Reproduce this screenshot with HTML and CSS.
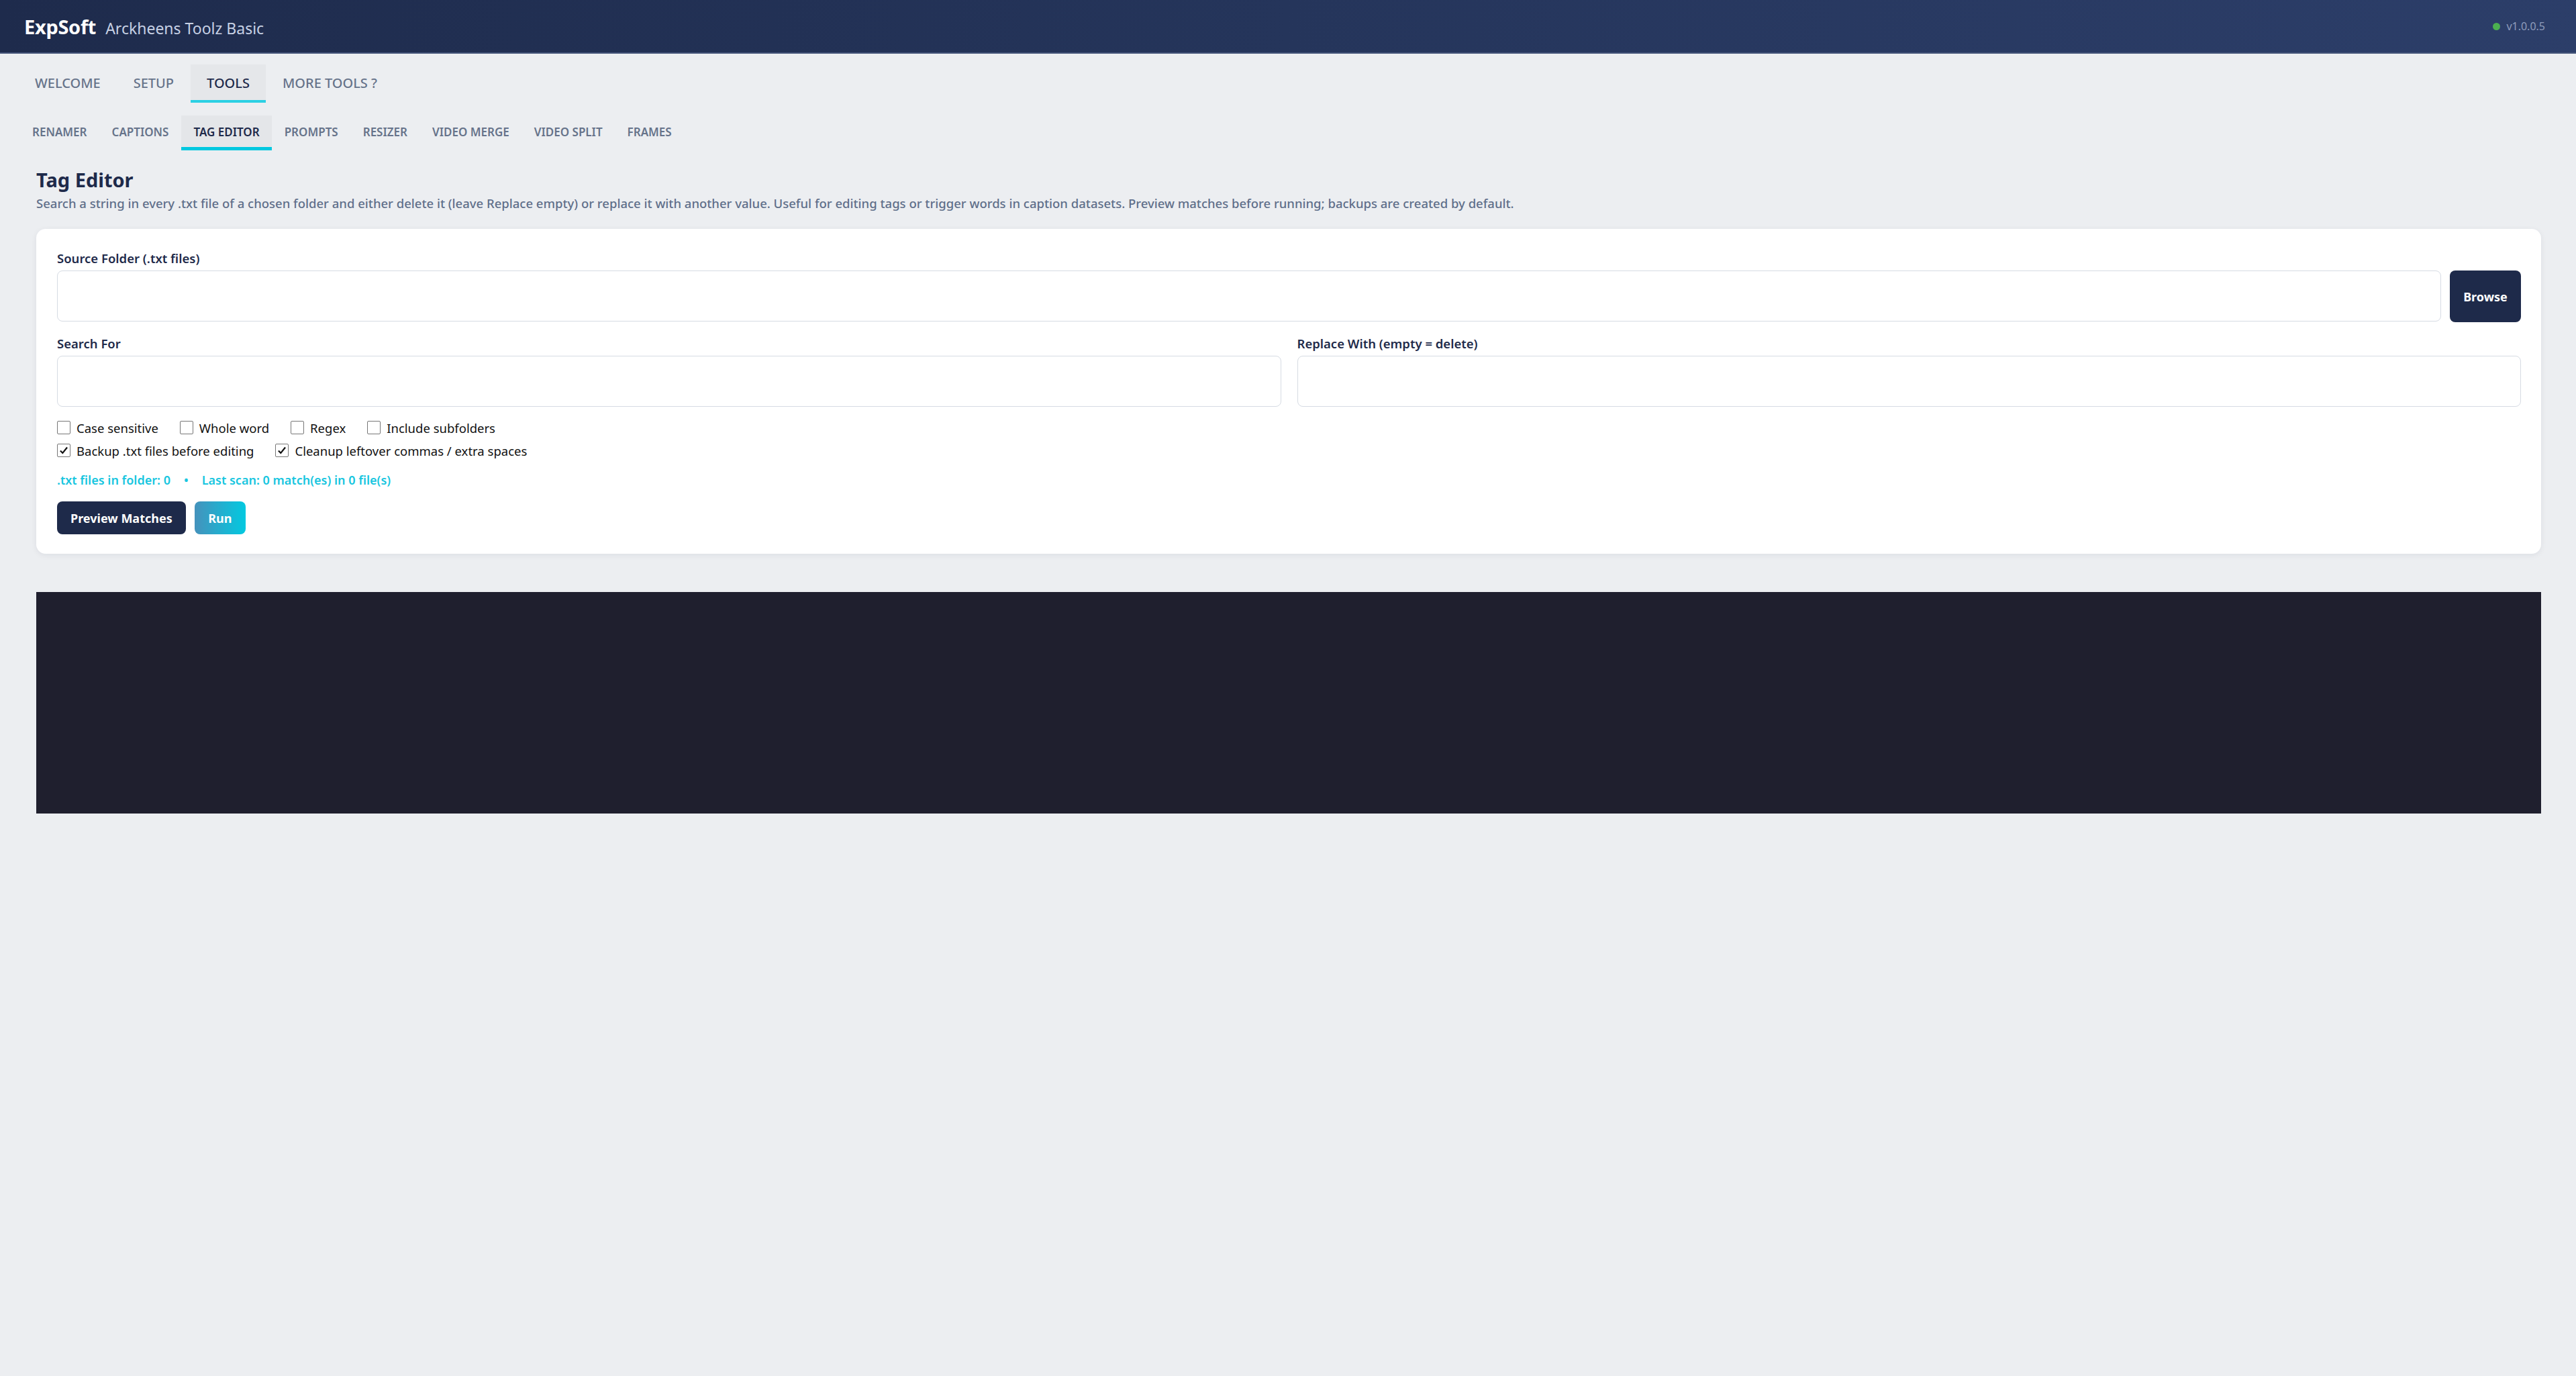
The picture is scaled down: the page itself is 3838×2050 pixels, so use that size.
FILE: index.html
```html
<!DOCTYPE html>
<html lang="en">
<head>
 <meta charset="UTF-8">
 <title>Arckheens Toolz Basic</title>
 <link rel="stylesheet" href="styles.css">
</head>
<body>
 <header class="topbar">
 <div class="brand">
 <span class="brand-name">ExpSoft</span>
 <span class="brand-app">Arckheens Toolz Basic</span>
 </div>
 <div class="version">
 <span class="version-dot"></span>
 <span>v1.0.0.5</span>
 </div>
 </header>

 <nav class="main-tabs">
 <div class="main-tab">WELCOME</div>
 <div class="main-tab">SETUP</div>
 <div class="main-tab active">TOOLS</div>
 <div class="main-tab">MORE TOOLS ?</div>
 </nav>

 <nav class="sub-tabs">
 <div class="sub-tab">RENAMER</div>
 <div class="sub-tab">CAPTIONS</div>
 <div class="sub-tab active">TAG EDITOR</div>
 <div class="sub-tab">PROMPTS</div>
 <div class="sub-tab">RESIZER</div>
 <div class="sub-tab">VIDEO MERGE</div>
 <div class="sub-tab">VIDEO SPLIT</div>
 <div class="sub-tab">FRAMES</div>
 </nav>

 <main class="content">
 <h1 class="page-title">Tag Editor</h1>
 <p class="page-desc">Search a string in every .txt file of a chosen folder and either delete it (leave Replace empty) or replace it with another value. Useful for editing tags or trigger words in caption datasets. Preview matches before running; backups are created by default.</p>

 <section class="card">
 <div class="field">
 <label class="field-label">Source Folder (.txt files)</label>
 <div class="folder-row">
 <input type="text" class="input-field">
 <button class="btn btn-dark btn-browse">Browse</button>
 </div>
 </div>

 <div class="field-grid">
 <div class="field">
 <label class="field-label">Search For</label>
 <input type="text" class="input-field">
 </div>
 <div class="field">
 <label class="field-label">Replace With (empty = delete)</label>
 <input type="text" class="input-field">
 </div>
 </div>

 <div class="check-row">
 <label class="check"><span class="check-box"></span>Case sensitive</label>
 <label class="check"><span class="check-box"></span>Whole word</label>
 <label class="check"><span class="check-box"></span>Regex</label>
 <label class="check"><span class="check-box"></span>Include subfolders</label>
 </div>
 <div class="check-row">
 <label class="check"><span class="check-box"><svg viewBox="0 0 16 16"><polyline points="3.5 8.5 6.5 11.5 12.5 4" fill="none" stroke="#111" stroke-width="2"/></svg></span>Backup .txt files before editing</label>
 <label class="check"><span class="check-box"><svg viewBox="0 0 16 16"><polyline points="3.5 8.5 6.5 11.5 12.5 4" fill="none" stroke="#111" stroke-width="2"/></svg></span>Cleanup leftover commas / extra spaces</label>
 </div>

 <div class="stats">
 <span>.txt files in folder: 0</span>
 <span class="stats-sep">•</span>
 <span>Last scan: 0 match(es) in 0 file(s)</span>
 </div>

 <div class="actions">
 <button class="btn btn-dark">Preview Matches</button>
 <button class="btn btn-run">Run</button>
 </div>
 </section>

 <div class="log-panel"></div>
 </main>
</body>
</html>
```

FILE: styles.css
```css
* {
 margin: 0;
 padding: 0;
 box-sizing: border-box;
 font-family: 'Noto Sans', 'Open Sans', sans-serif;
}
body {
 background: #eceef1;
 min-height: 100vh;
}
.topbar {
 height: 80px;
 display: flex;
 align-items: center;
 justify-content: space-between;
 padding: 0 46px 0 36px;
 background: linear-gradient(90deg, #1e2b4c 0%, #25355b 50%, #2c3e69 100%);
 border-bottom: 2px solid #45557a;
}
.brand {
 display: flex;
 align-items: baseline;
 gap: 14px;
}
.brand-name {
 color: #fff;
 font-size: 29px;
 font-weight: 700;
 letter-spacing: -0.3px;
}
.brand-app {
 color: #c6d0e4;
 font-size: 23px;
}
.version {
 display: flex;
 align-items: center;
 gap: 9px;
 color: #8e9cbb;
 font-size: 16px;
}
.version-dot {
 width: 11px;
 height: 11px;
 border-radius: 50%;
 background: #4caf50;
}
.main-tabs {
 display: flex;
 gap: 1px;
 padding: 16px 28px 0;
}
.main-tab {
 height: 57px;
 padding: 2px 24px 0;
 display: flex;
 align-items: center;
 font-size: 20px;
 font-weight: 500;
 color: #66738a;
 border-bottom: 4px solid transparent;
}
.main-tab.active {
 color: #1e2a4a;
 background: #e5e7ea;
 border-bottom-color: #2bd0e4;
}
.sub-tabs {
 display: flex;
 gap: 1px;
 padding: 19px 30px 0;
}
.sub-tab {
 height: 52px;
 padding: 2px 18px 0;
 display: flex;
 align-items: center;
 font-size: 17px;
 font-weight: 600;
 color: #66738a;
 border-bottom: 5px solid transparent;
}
.sub-tab.active {
 color: #1e2a4a;
 background: #e4e6e9;
 border-bottom-color: #00c8e0;
}
.content {
 padding: 24px 52px 40px 54px;
}
.page-title {
 font-size: 29px;
 font-weight: 700;
 color: #1e2a4a;
 line-height: 40px;
}
.page-desc {
 font-size: 18.5px;
 font-weight: 500;
 color: #5f6f8a;
 margin-top: 2px;
}
.card {
 margin-top: 26px;
 background: #fff;
 border-radius: 14px;
 padding: 31px 30px 29px 31px;
 box-shadow: 0 2px 10px rgba(20, 30, 60, 0.07);
}
.field-label {
 display: block;
 font-size: 18.5px;
 font-weight: 600;
 color: #1e2a4a;
 margin-bottom: 6px;
}
.folder-row {
 display: flex;
 gap: 13px;
}
.input-field {
 width: 100%;
 height: 76px;
 border: 1.5px solid #d6dbe3;
 border-radius: 8px;
 padding: 0 16px;
 font-size: 18px;
 background: #fff;
}
.field-grid {
 display: grid;
 grid-template-columns: 1fr 1fr;
 gap: 24px;
 margin-top: 19px;
}
.check-row {
 display: flex;
 gap: 32px;
 height: 34px;
 align-items: center;
}
.field-grid + .check-row {
 margin-top: 14px;
}
.check {
 display: flex;
 align-items: center;
 gap: 9px;
 font-size: 18.5px;
 color: #111;
}
.check-box {
 width: 20px;
 height: 20px;
 border: 1.5px solid #767676;
 border-radius: 2px;
 background: #fff;
 display: flex;
}
.check-box svg {
 width: 100%;
 height: 100%;
}
.stats {
 display: flex;
 gap: 20px;
 margin-top: 15px;
 font-size: 18px;
 font-weight: 600;
 color: #18c6e0;
}
.actions {
 display: flex;
 gap: 13px;
 margin-top: 20px;
}
.btn {
 border: none;
 border-radius: 8px;
 height: 49px;
 padding: 0 20px;
 font-size: 18px;
 font-weight: 700;
 color: #fff;
 cursor: pointer;
}
.btn-dark {
 background: #1e2a4a;
}
.btn-browse {
 flex: none;
 width: 106px;
 height: 77px;
 padding: 0;
}
.btn-run {
 width: 76px;
 padding: 0;
 background: linear-gradient(90deg, #4592bc 0%, #03c9e0 100%);
}
.log-panel {
 margin-top: 57px;
 height: 330px;
 background: #1f1f2e;
}
```
